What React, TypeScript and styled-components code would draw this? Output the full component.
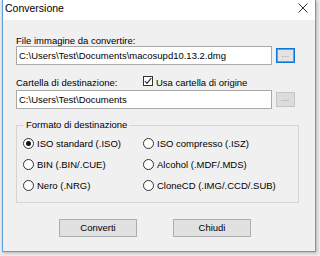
import React from "react";
import styled, { createGlobalStyle } from "styled-components";

const GlobalStyle = createGlobalStyle`
  html, body { margin: 0; padding: 0; background: #ececec; }
  body { font-family: "Liberation Sans", Arial, sans-serif; color: #000; }
  * { box-sizing: border-box; }
`;

const Screen = styled.div`
  width: 320px;
  height: 256px;
  overflow: hidden;
  background: #ececec;
  padding-left: 2px;
`;

const Window = styled.div`
  width: 314px;
  height: 252px;
  border: 1px solid #5c9fd8;
  border-top: none;
  background: #f0f0f0;
  display: flex;
  flex-direction: column;
  box-shadow: 1px 1px 3px rgba(0, 0, 0, 0.25);
`;

const TitleBar = styled.div`
  height: 20px;
  background: #ffffff;
  display: flex;
  align-items: flex-start;
  justify-content: space-between;
  padding: 2px 7px 0 2px;
`;

const Title = styled.span`
  font-size: 10.5px;
  line-height: 12px;
`;

const CloseIcon = styled.svg`
  width: 10px;
  height: 10px;
  margin-top: 1px;
`;

const Body = styled.div`
  flex: 1;
  display: flex;
  flex-direction: column;
  padding: 16px 14px 0 13px;
  font-size: 9.5px;
`;

const Label = styled.div`
  line-height: 10px;
  height: 10px;
  white-space: nowrap;
`;

const FieldRow = styled.div<{ $gap?: number }>`
  display: flex;
  align-items: center;
  gap: 4px;
  margin-top: ${(p) => p.$gap ?? 0}px;
`;

const TextInput = styled.div`
  width: 256px;
  height: 19px;
  border: 1px solid #a9a9a9;
  background: #ffffff;
  padding-left: 2px;
  display: flex;
  align-items: center;
  white-space: nowrap;
  overflow: hidden;
  line-height: 10px;
`;

const BrowseButton = styled.div<{ $focused?: boolean }>`
  width: 19px;
  height: 15px;
  border: 1px solid ${(p) => (p.$focused ? "#0a78d4" : "#c4c4c4")};
  box-shadow: ${(p) => (p.$focused ? "inset 0 0 0 1px #5aa2e0" : "none")};
  background: ${(p) => (p.$focused ? "#e3e3e3" : "#dcdcdc")};
  color: #7a7a7a;
  font-size: 8px;
  line-height: 8px;
  display: flex;
  align-items: flex-end;
  justify-content: center;
  padding-bottom: 3px;
  letter-spacing: 0.5px;
`;

const DestRow = styled.div`
  display: flex;
  align-items: flex-start;
  margin-top: 13px;
  height: 10px;
`;

const DestLabel = styled(Label)`
  width: 127px;
`;

const CheckLabel = styled.label`
  display: flex;
  align-items: flex-start;
  gap: 3px;
  line-height: 10px;
  white-space: nowrap;
`;

const CheckBox = styled.span`
  width: 10px;
  height: 10px;
  margin-top: -2px;
  border: 1px solid #333;
  background: #fff;
  display: flex;
  align-items: center;
  justify-content: center;
`;

const Group = styled.fieldset`
  margin: 11px 0 0 0;
  width: 283px;
  border: 1px solid #d5d5d5;
  padding: 3px 4px 6px 6px;
  min-width: 0;
`;

const Legend = styled.legend`
  font-size: 9.5px;
  line-height: 10px;
  padding: 0 2px;
  margin-left: 1px;
`;

const RadioGrid = styled.div`
  display: grid;
  grid-template-columns: 120px 1fr;
  grid-auto-rows: 21px;
`;

const RadioOption = styled.label`
  display: flex;
  align-items: center;
  gap: 3px;
  white-space: nowrap;
  line-height: 10px;
`;

const RadioCircle = styled.span<{ $checked?: boolean }>`
  width: 11px;
  height: 11px;
  border-radius: 50%;
  border: 1px solid #333;
  background: #fff;
  display: flex;
  align-items: center;
  justify-content: center;
  &::after {
    content: "";
    width: 5px;
    height: 5px;
    border-radius: 50%;
    background: ${(p) => (p.$checked ? "#111" : "transparent")};
  }
`;

const ButtonRow = styled.div`
  display: flex;
  gap: 36px;
  margin-top: 16px;
  padding-left: 43px;
`;

const DialogButton = styled.div`
  width: 78px;
  height: 18px;
  border: 1px solid #adadad;
  background: #e1e1e1;
  display: flex;
  align-items: center;
  justify-content: center;
  font-size: 9.5px;
  line-height: 10px;
`;

const formats: { label: string; checked?: boolean }[] = [
  { label: "ISO standard (.ISO)", checked: true },
  { label: "ISO compresso (.ISZ)" },
  { label: "BIN (.BIN/.CUE)" },
  { label: "Alcohol (.MDF/.MDS)" },
  { label: "Nero (.NRG)" },
  { label: "CloneCD (.IMG/.CCD/.SUB)" },
];

export default function App() {
  return (
    <>
      <GlobalStyle />
      <Screen>
        <Window>
          <TitleBar>
            <Title>Conversione</Title>
            <CloseIcon viewBox="0 0 10 10">
              <path d="M0.5 0.5 L9.5 9.5 M9.5 0.5 L0.5 9.5" stroke="#333" strokeWidth="1" fill="none" />
            </CloseIcon>
          </TitleBar>
          <Body>
            <Label>File immagine da convertire:</Label>
            <FieldRow>
              <TextInput>C:\Users\Test\Documents\macosupd10.13.2.dmg</TextInput>
              <BrowseButton $focused>...</BrowseButton>
            </FieldRow>
            <DestRow>
              <DestLabel>Cartella di destinazione:</DestLabel>
              <CheckLabel>
                <CheckBox>
                  <svg width="8" height="8" viewBox="0 0 8 8">
                    <path d="M0.8 4 L3 6.4 L7.3 1" stroke="#222" strokeWidth="1.1" fill="none" />
                  </svg>
                </CheckBox>
                Usa cartella di origine
              </CheckLabel>
            </DestRow>
            <FieldRow $gap={2}>
              <TextInput>C:\Users\Test\Documents</TextInput>
              <BrowseButton>...</BrowseButton>
            </FieldRow>
            <Group>
              <Legend>Formato di destinazione</Legend>
              <RadioGrid>
                {formats.map((f) => (
                  <RadioOption key={f.label}>
                    <RadioCircle $checked={f.checked} />
                    {f.label}
                  </RadioOption>
                ))}
              </RadioGrid>
            </Group>
            <ButtonRow>
              <DialogButton>Converti</DialogButton>
              <DialogButton>Chiudi</DialogButton>
            </ButtonRow>
          </Body>
        </Window>
      </Screen>
    </>
  );
}
